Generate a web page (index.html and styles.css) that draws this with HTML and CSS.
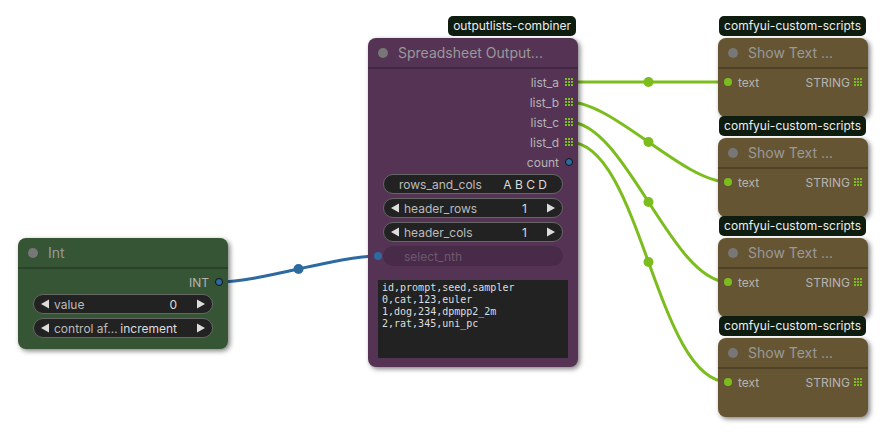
FILE: index.html
```html
<!DOCTYPE html>
<html lang="en">
<head>
    <meta charset="UTF-8">
    <title>Workflow</title>
    <link rel="stylesheet" href="styles.css">
</head>
<body>
<div class="canvas">
    <svg class="links" width="890" height="440">
        <g class="green">
            <path d="M569 82 L728 82"/>
            <path d="M569 102 C613.5 102 683.5 182 728 182"/>
            <path d="M569 122 C625.4 122 671.6 282 728 282"/>
            <path d="M569 142 C641 142 656 382 728 382"/>
            <circle cx="648.5" cy="82" r="5"/>
            <circle cx="648.5" cy="142" r="5"/>
            <circle cx="648.5" cy="202" r="5"/>
            <circle cx="648.5" cy="262" r="5"/>
        </g>
        <g class="blue">
            <path d="M219 282 C259.3 282 337.7 256 378 256"/>
            <circle cx="298.5" cy="269" r="5"/>
        </g>
    </svg>

    <!-- Int -->
    <div class="node green-node" style="left:18px; top:238px; width:210px;">
        <div class="node-title"><span class="title-dot"></span>Int</div>
        <div class="node-body">
            <div class="slot out"><span class="label">INT</span><span class="pin blue-pin"></span></div>
            <div class="widgets">
                <div class="widget">
                    <svg class="arrow" viewBox="0 0 9 10"><polygon points="9,0 9,10 0,5"/></svg>
                    <span class="w-label">value</span>
                    <span class="w-value">0</span>
                    <svg class="arrow" viewBox="0 0 9 10"><polygon points="0,0 0,10 9,5"/></svg>
                </div>
                <div class="widget">
                    <svg class="arrow" viewBox="0 0 9 10"><polygon points="9,0 9,10 0,5"/></svg>
                    <span class="w-label">control af…</span>
                    <span class="w-value">increment</span>
                    <svg class="arrow" viewBox="0 0 9 10"><polygon points="0,0 0,10 9,5"/></svg>
                </div>
            </div>
        </div>
    </div>

    <!-- Spreadsheet Output -->
    <div class="node purple-node" style="left:368px; top:38px; width:210px;">
        <div class="badge">outputlists-combiner</div>
        <div class="node-title"><span class="title-dot"></span>Spreadsheet Output...</div>
        <div class="node-body">
            <div class="slot out"><span class="label">list_a</span><span class="pin"><svg class="grid" viewBox="0 0 8 8"><path d="M0 0h2v2H0zM3 0h2v2H3zM6 0h2v2H6zM0 3h2v2H0zM3 3h2v2H3zM6 3h2v2H6zM0 6h2v2H0zM3 6h2v2H3zM6 6h2v2H6z"/></svg></span></div>
            <div class="slot out"><span class="label">list_b</span><span class="pin"><svg class="grid" viewBox="0 0 8 8"><path d="M0 0h2v2H0zM3 0h2v2H3zM6 0h2v2H6zM0 3h2v2H0zM3 3h2v2H3zM6 3h2v2H6zM0 6h2v2H0zM3 6h2v2H3zM6 6h2v2H6z"/></svg></span></div>
            <div class="slot out"><span class="label">list_c</span><span class="pin"><svg class="grid" viewBox="0 0 8 8"><path d="M0 0h2v2H0zM3 0h2v2H3zM6 0h2v2H6zM0 3h2v2H0zM3 3h2v2H3zM6 3h2v2H6zM0 6h2v2H0zM3 6h2v2H3zM6 6h2v2H6z"/></svg></span></div>
            <div class="slot out"><span class="label">list_d</span><span class="pin"><svg class="grid" viewBox="0 0 8 8"><path d="M0 0h2v2H0zM3 0h2v2H3zM6 0h2v2H6zM0 3h2v2H0zM3 3h2v2H3zM6 3h2v2H6zM0 6h2v2H0zM3 6h2v2H3zM6 6h2v2H6z"/></svg></span></div>
            <div class="slot out"><span class="label">count</span><span class="pin blue-pin"></span></div>
            <div class="widgets">
                <div class="widget plain">
                    <span class="w-label">rows_and_cols</span>
                    <span class="w-value">A B C D</span>
                </div>
                <div class="widget">
                    <svg class="arrow" viewBox="0 0 9 10"><polygon points="9,0 9,10 0,5"/></svg>
                    <span class="w-label">header_rows</span>
                    <span class="w-value">1</span>
                    <svg class="arrow" viewBox="0 0 9 10"><polygon points="0,0 0,10 9,5"/></svg>
                </div>
                <div class="widget">
                    <svg class="arrow" viewBox="0 0 9 10"><polygon points="9,0 9,10 0,5"/></svg>
                    <span class="w-label">header_cols</span>
                    <span class="w-value">1</span>
                    <svg class="arrow" viewBox="0 0 9 10"><polygon points="0,0 0,10 9,5"/></svg>
                </div>
                <div class="widget-row">
                    <span class="in-pin blue-in"></span>
                    <div class="widget disabled"><span class="w-label">select_nth</span></div>
                </div>
            </div>
            <pre class="textarea">id,prompt,seed,sampler
0,cat,123,euler
1,dog,234,dpmpp2_2m
2,rat,345,uni_pc</pre>
        </div>
    </div>

    <!-- Show Text nodes -->
    <div class="node brown-node show" style="left:718px; top:38px; width:150px;">
        <div class="badge">comfyui-custom-scripts</div>
        <div class="node-title"><span class="title-dot"></span>Show Text ...</div>
        <div class="node-body">
            <div class="slot both"><span class="in-pin"></span><span class="label in-label">text</span><span class="label">STRING</span><span class="pin"><svg class="grid" viewBox="0 0 8 8"><path d="M0 0h2v2H0zM3 0h2v2H3zM6 0h2v2H6zM0 3h2v2H0zM3 3h2v2H3zM6 3h2v2H6zM0 6h2v2H0zM3 6h2v2H3zM6 6h2v2H6z"/></svg></span></div>
        </div>
    </div>
    <div class="node brown-node show" style="left:718px; top:138px; width:150px;">
        <div class="badge">comfyui-custom-scripts</div>
        <div class="node-title"><span class="title-dot"></span>Show Text ...</div>
        <div class="node-body">
            <div class="slot both"><span class="in-pin"></span><span class="label in-label">text</span><span class="label">STRING</span><span class="pin"><svg class="grid" viewBox="0 0 8 8"><path d="M0 0h2v2H0zM3 0h2v2H3zM6 0h2v2H6zM0 3h2v2H0zM3 3h2v2H3zM6 3h2v2H6zM0 6h2v2H0zM3 6h2v2H3zM6 6h2v2H6z"/></svg></span></div>
        </div>
    </div>
    <div class="node brown-node show" style="left:718px; top:238px; width:150px;">
        <div class="badge">comfyui-custom-scripts</div>
        <div class="node-title"><span class="title-dot"></span>Show Text ...</div>
        <div class="node-body">
            <div class="slot both"><span class="in-pin"></span><span class="label in-label">text</span><span class="label">STRING</span><span class="pin"><svg class="grid" viewBox="0 0 8 8"><path d="M0 0h2v2H0zM3 0h2v2H3zM6 0h2v2H6zM0 3h2v2H0zM3 3h2v2H3zM6 3h2v2H6zM0 6h2v2H0zM3 6h2v2H3zM6 6h2v2H6z"/></svg></span></div>
        </div>
    </div>
    <div class="node brown-node show" style="left:718px; top:338px; width:150px;">
        <div class="badge">comfyui-custom-scripts</div>
        <div class="node-title"><span class="title-dot"></span>Show Text ...</div>
        <div class="node-body">
            <div class="slot both"><span class="in-pin"></span><span class="label in-label">text</span><span class="label">STRING</span><span class="pin"><svg class="grid" viewBox="0 0 8 8"><path d="M0 0h2v2H0zM3 0h2v2H3zM6 0h2v2H6zM0 3h2v2H0zM3 3h2v2H3zM6 3h2v2H6zM0 6h2v2H0zM3 6h2v2H3zM6 6h2v2H6z"/></svg></span></div>
        </div>
    </div>
</div>
</body>
</html>
```

FILE: styles.css
```css
body {
    margin: 0;
    background-color: #fff;
    font-family: Inter, "Liberation Sans", sans-serif;
}
.canvas {
    position: relative;
    width: 890px;
    height: 440px;
    overflow: hidden;
}
.links {
    position: absolute;
    left: 0;
    top: 0;
}
.links path {
    fill: none;
    stroke-width: 3;
}
.links .green path {
    stroke: #7bbd1c;
}
.links .green circle {
    fill: #7bbd1c;
}
.links .blue path {
    stroke: #2d6aa0;
}
.links .blue circle {
    fill: #2d6aa0;
}

/* nodes */
.node {
    position: absolute;
    border-radius: 8px;
    box-shadow: 2px 2px 5px rgba(0, 0, 0, 0.5);
}
.green-node { background-color: #355535; }
.purple-node { background-color: #553355; }
.brown-node { background-color: #665533; }

.node-title {
    height: 29px;
    border-bottom: 2px solid rgba(0, 0, 0, 0.22);
    display: flex;
    align-items: center;
    gap: 10px;
    padding-left: 10px;
    color: #999;
    font-size: 14px;
}
.title-dot {
    width: 10px;
    height: 10px;
    border-radius: 50%;
    background-color: #777;
}
.node-body {
    padding-top: 3px;
    display: flex;
    flex-direction: column;
}
.green-node .node-body { padding-bottom: 11px; }
.purple-node .node-body { padding-bottom: 9px; }
.show .node-body { padding-bottom: 25px; }

.badge {
    position: absolute;
    right: 2px;
    top: -22px;
    height: 20px;
    line-height: 20px;
    padding: 0 5px;
    border-radius: 5px;
    background-color: #0f1c10;
    color: #eee;
    font-size: 12px;
    white-space: nowrap;
}

/* slots */
.slot {
    height: 20px;
    display: flex;
    align-items: center;
    font-size: 12px;
    color: #b4b4b4;
}
.slot.out {
    justify-content: flex-end;
    padding-right: 4px;
}
.slot .pin {
    width: 10px;
    height: 10px;
    margin-left: 5px;
    display: flex;
    align-items: center;
    justify-content: center;
}
.grid {
    width: 8px;
    height: 8px;
    fill: #7bbd1c;
}
.blue-pin::after {
    content: "";
    width: 6px;
    height: 6px;
    border-radius: 50%;
    background-color: #2d6aa0;
    border: 1px solid #111;
}
.slot.both {
    padding: 0 5px 0 6px;
}
.slot.both .pin {
    margin-left: 3px;
}
.in-pin {
    width: 8px;
    height: 8px;
    border-radius: 50%;
    background-color: #7bbd1c;
}
.in-label {
    margin-left: 6px;
    flex: 1;
}

/* widgets */
.widgets {
    margin-top: 2px;
    display: flex;
    flex-direction: column;
    gap: 4px;
}
.widget {
    height: 18px;
    margin: 0 15px;
    padding: 0 7px;
    display: flex;
    align-items: center;
    background-color: #222;
    border: 1px solid #666;
    border-radius: 10px;
    font-size: 12px;
    color: #ddd;
}
.widget .arrow {
    width: 8px;
    height: 10px;
    fill: #ddd;
}
.w-label {
    flex: 1;
    margin-left: 5px;
    color: #bbb;
    white-space: nowrap;
}
.w-value {
    margin-right: 20px;
    color: #ddd;
    white-space: nowrap;
}
.widget.plain {
    padding: 0 15px;
}
.widget.plain .w-label {
    margin-left: 0;
}
.widget.plain .w-value {
    margin-right: 0;
}
.widget-row {
    position: relative;
}
.widget-row .blue-in {
    position: absolute;
    left: 6px;
    top: 6px;
    background-color: #2d6aa0;
}
.widget.disabled {
    background-color: rgba(0, 0, 0, 0.15);
    border-color: transparent;
    padding-left: 15px;
}
.widget.disabled .w-label {
    color: rgba(255, 255, 255, 0.22);
}

.textarea {
    margin: 14px 10px 0 10px;
    height: 74px;
    padding: 2px 4px 2px 4px;
    background-color: #222;
    color: #ddd;
    font-family: "DejaVu Sans Mono", monospace;
    font-size: 10px;
    line-height: 12px;
}
```
